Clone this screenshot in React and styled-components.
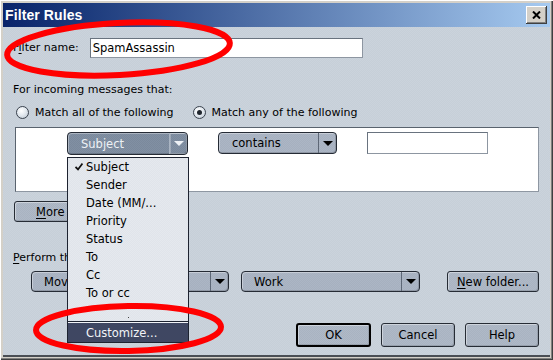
import React from "react";
import styled, { createGlobalStyle } from "styled-components";

const GlobalStyle = createGlobalStyle`
  html, body {
    margin: 0;
    padding: 0;
    background: #d4d0c8;
  }
  body {
    font-family: "DejaVu Sans", "Liberation Sans", sans-serif;
    font-size: 11px;
    color: #000;
  }
  * {
    box-sizing: border-box;
  }
`;

const dither = (a, b) => `
  background-color: ${a};
  background-image: repeating-conic-gradient(${a} 0 25%, ${b} 0 50%);
  background-size: 2px 2px;
`;

const Window = styled.div`
  position: relative;
  width: 553px;
  height: 360px;
  display: flex;
  flex-direction: column;
  padding: 3px;
  background: #d4d0c8;
  box-shadow: inset 1px 1px 0 #ffffff, inset -1px -1px 0 #404040,
    inset -2px -2px 0 #808080;
  overflow: hidden;
`;

const TitleBar = styled.div`
  flex: none;
  height: 24px;
  display: flex;
  align-items: center;
  justify-content: space-between;
  padding: 0 3px 0 2px;
  background: linear-gradient(to right, #0a246a 0%, #1c3a7c 15%, #a6caf0 100%);
`;

const Title = styled.span`
  color: #fff;
  font: bold 14px "Liberation Sans", Arial, sans-serif;
  letter-spacing: 0.1px;
`;

const CloseButton = styled.button`
  width: 21px;
  height: 18px;
  padding: 0;
  display: flex;
  align-items: center;
  justify-content: center;
  background: #d4d0c8;
  border: none;
  box-shadow: inset -1px -1px 0 #404040, inset 1px 1px 0 #ffffff,
    inset -2px -2px 0 #808080;
`;

const Body = styled.div`
  flex: 1;
  min-height: 0;
  display: flex;
  flex-direction: column;
  padding: 11px 11px 0 10px;
  ${dither("#c6cfd8", "#cbd3dc")}
  border-bottom: 2px solid #4a4e54;

  & > * {
    flex-shrink: 0;
  }
`;

const Row = styled.div`
  display: flex;
  align-items: center;
  height: ${({ $h }) => ($h ? `${$h}px` : "auto")};
  margin-top: ${({ $mt }) => $mt || 0}px;
  margin-left: ${({ $ml }) => $ml || 0}px;
  gap: ${({ $gap }) => $gap || 0}px;
  justify-content: ${({ $end }) => ($end ? "flex-end" : "flex-start")};
`;

const Label = styled.span`
  line-height: 14px;
  height: 14px;
  white-space: nowrap;
  margin-top: ${({ $mt }) => $mt || 0}px;
`;

const Key = styled.span`
  text-decoration: underline;
  text-underline-offset: 2px;
`;

const TextField = styled.div`
  width: ${({ $w }) => $w}px;
  height: ${({ $h }) => $h || 20}px;
  margin-left: ${({ $ml }) => $ml || 0}px;
  display: flex;
  align-items: center;
  padding-left: 2px;
  background: #fff;
  border: 1px solid #69737f;
  border-right-color: #8d96a1;
  border-bottom-color: #8d96a1;
  font-size: 11.5px;
`;

const RadioOption = styled.label`
  display: flex;
  align-items: center;
  gap: 6px;
  margin-left: ${({ $ml }) => $ml || 0}px;
`;

const Radio = styled.span`
  width: 13px;
  height: 13px;
  border-radius: 50%;
  border: 1px solid #3a424d;
  background: radial-gradient(circle at 40% 35%, #ffffff 0%, #e4eaf0 45%, #b7c2ce 100%);
  display: flex;
  align-items: center;
  justify-content: center;

  &::after {
    content: "";
    width: 5px;
    height: 5px;
    border-radius: 50%;
    background: #1f252d;
    display: ${({ $checked }) => ($checked ? "block" : "none")};
  }
`;

const Panel = styled.div`
  height: 65px;
  margin: 7px 0 0 2px;
  background: #fff;
  border: 1px solid #59636e;
  border-right-color: #8e97a2;
  border-bottom-color: #8e97a2;
  display: flex;
  align-items: flex-start;
  padding: 4px 0 0 51px;
  gap: 30px;
`;

const Field = styled.div`
  position: relative;
`;

const Combo = styled.div`
  width: ${({ $w }) => $w}px;
  height: ${({ $h }) => $h || 22}px;
  margin-left: ${({ $ml }) => $ml || 0}px;
  display: flex;
  border: 1px solid #252b35;
  border-radius: 4px;
  overflow: hidden;
  ${({ $active }) =>
    $active ? dither("#7b899c", "#8190a3") : dither("#a6b0bf", "#acb6c5")}
  color: ${({ $active }) => ($active ? "#eef1f5" : "#000")};
  box-shadow: inset 1px 1px 0 rgba(255, 255, 255, 0.35),
    inset -1px -1px 0 rgba(0, 0, 0, 0.15);
`;

const ComboValue = styled.span`
  flex: 1;
  display: flex;
  align-items: center;
  padding-left: ${({ $pl }) => $pl || 13}px;
  white-space: nowrap;
  overflow: hidden;
  font-size: 11.5px;
`;

const ComboArrow = styled.span`
  flex: none;
  width: 18px;
  display: flex;
  align-items: center;
  justify-content: center;
  border-left: 1px solid
    ${({ $active }) => ($active ? "#aab5c3" : "#5d6776")};
  ${({ $active }) =>
    $active ? "box-shadow: inset 0 0 0 1px rgba(255,255,255,0.25);" : ""}

  &::after {
    content: "";
    border-left: 5px solid transparent;
    border-right: 5px solid transparent;
    border-top: 5px solid currentColor;
  }
`;

const Button = styled.button`
  width: ${({ $w }) => $w}px;
  height: ${({ $h }) => $h || 21}px;
  margin-left: ${({ $ml }) => $ml || 0}px;
  padding: 0;
  font: inherit;
  font-size: 11.5px;
  color: #000;
  border: ${({ $default }) => ($default ? "2px solid #000" : "1px solid #262c35")};
  border-radius: 3px;
  ${dither("#a9b3c1", "#afb9c7")}
  box-shadow: inset 1px 1px 0 rgba(255, 255, 255, 0.4),
    inset -1px -1px 0 rgba(0, 0, 0, 0.12);
  display: flex;
  align-items: center;
  justify-content: ${({ $left }) => ($left ? "flex-start" : "center")};
  padding-left: ${({ $left }) => ($left ? "21px" : "0")};
  white-space: nowrap;
  overflow: hidden;
`;

const Menu = styled.ul`
  position: absolute;
  top: calc(100% + 2px);
  left: 0;
  width: 122px;
  margin: 0;
  padding: 0;
  list-style: none;
  border: 1px solid #1d2330;
  ${dither("#e0e4ea", "#e5e9ee")}
  z-index: 5;
  font-size: 11.5px;
`;

const MenuItem = styled.li`
  position: relative;
  height: 18px;
  display: flex;
  align-items: center;
  padding-left: 18px;
  white-space: nowrap;
`;

const CheckMark = styled.svg`
  position: absolute;
  left: 7px;
  top: 5px;
`;

const MenuMore = styled.li`
  height: 19px;
  display: flex;
  align-items: flex-end;
  justify-content: center;
  padding: 0 0 3px 0;

  &::after {
    content: "";
    width: 1px;
    height: 1px;
    background: #444;
  }
`;

const MenuSeparator = styled.li`
  height: 2px;
  border-top: 1px solid #1d2330;
  border-bottom: 1px solid #f2f4f7;
`;

const MenuHighlight = styled.li`
  height: 19px;
  display: flex;
  align-items: center;
  padding-left: 18px;
  background: #3f4762;
  color: #f2f4f8;
`;

const Annotations = styled.svg`
  position: absolute;
  left: 0;
  top: 0;
  width: 553px;
  height: 360px;
  pointer-events: none;
  z-index: 10;
`;

const fields = ["Subject", "Sender", "Date (MM/...", "Priority", "Status", "To", "Cc", "To or cc"];

export default function App() {
  return (
    <>
      <GlobalStyle />
      <Window>
        <TitleBar>
          <Title>Filter Rules</Title>
          <CloseButton>
            <svg width="9" height="8" viewBox="0 0 9 8">
              <path d="M1 0.5 L8 7.5 M8 0.5 L1 7.5" stroke="#000" strokeWidth="2" />
            </svg>
          </CloseButton>
        </TitleBar>

        <Body>
          <Row $h={20}>
            <Label>
              F<Key>i</Key>lter name:
            </Label>
            <TextField $w={273} $ml={11}>SpamAssassin</TextField>
          </Row>

          <Label $mt={25}>For incoming messages that:</Label>

          <Row $h={16} $mt={7} $ml={3}>
            <RadioOption>
              <Radio />
              Match all of the following
            </RadioOption>
            <RadioOption $ml={19}>
              <Radio $checked />
              Match any of the following
            </RadioOption>
          </Row>

          <Panel>
            <Field>
              <Combo $w={121} $h={23} $active>
                <ComboValue>Subject</ComboValue>
                <ComboArrow $active />
              </Combo>
              <Menu>
                {fields.map((f, i) => (
                  <MenuItem key={f}>
                    {i === 0 && (
                      <CheckMark width="8" height="8" viewBox="0 0 8 8">
                        <path d="M0.5 4 L3 6.5 L7.5 0.5" stroke="#111" strokeWidth="1.8" fill="none" />
                      </CheckMark>
                    )}
                    {f}
                  </MenuItem>
                ))}
                <MenuMore />
                <MenuSeparator />
                <MenuHighlight>Customize...</MenuHighlight>
              </Menu>
            </Field>
            <Combo $w={119}>
              <ComboValue>contains</ComboValue>
              <ComboArrow />
            </Combo>
            <TextField $w={121} $h={22} />
          </Panel>

          <Row $h={21} $mt={9} $ml={1}>
            <Button $w={74} $left>
              <Key>M</Key>ore
            </Button>
          </Row>

          <Label $mt={29}>
            <Key>P</Key>erform this action:
          </Label>

          <Row $h={21} $mt={6} $ml={18}>
            <Combo $w={198} $h={21}>
              <ComboValue $pl={12}>Move to folder</ComboValue>
              <ComboArrow />
            </Combo>
            <Combo $w={179} $h={21} $ml={12}>
              <ComboValue $pl={12}>Work</ComboValue>
              <ComboArrow />
            </Combo>
            <Button $w={92} $ml={27}>
              <Key>N</Key>ew folder...
            </Button>
          </Row>

          <Row $h={24} $mt={31} $end $gap={10}>
            <Button $w={75} $h={24} $default>
              OK
            </Button>
            <Button $w={74} $h={24}>
              Cancel
            </Button>
            <Button $w={74} $h={24}>
              Help
            </Button>
          </Row>
        </Body>

        <Annotations viewBox="0 0 553 360">
          <ellipse
            cx="118.5"
            cy="49"
            rx="111.5"
            ry="26"
            transform="rotate(-3 118.5 49)"
            fill="none"
            stroke="#ff0000"
            strokeWidth="6"
          />
          <ellipse
            cx="128.5"
            cy="328.5"
            rx="92.5"
            ry="22.5"
            transform="rotate(-1 128.5 328.5)"
            fill="none"
            stroke="#ff0000"
            strokeWidth="6"
          />
        </Annotations>
      </Window>
    </>
  );
}
